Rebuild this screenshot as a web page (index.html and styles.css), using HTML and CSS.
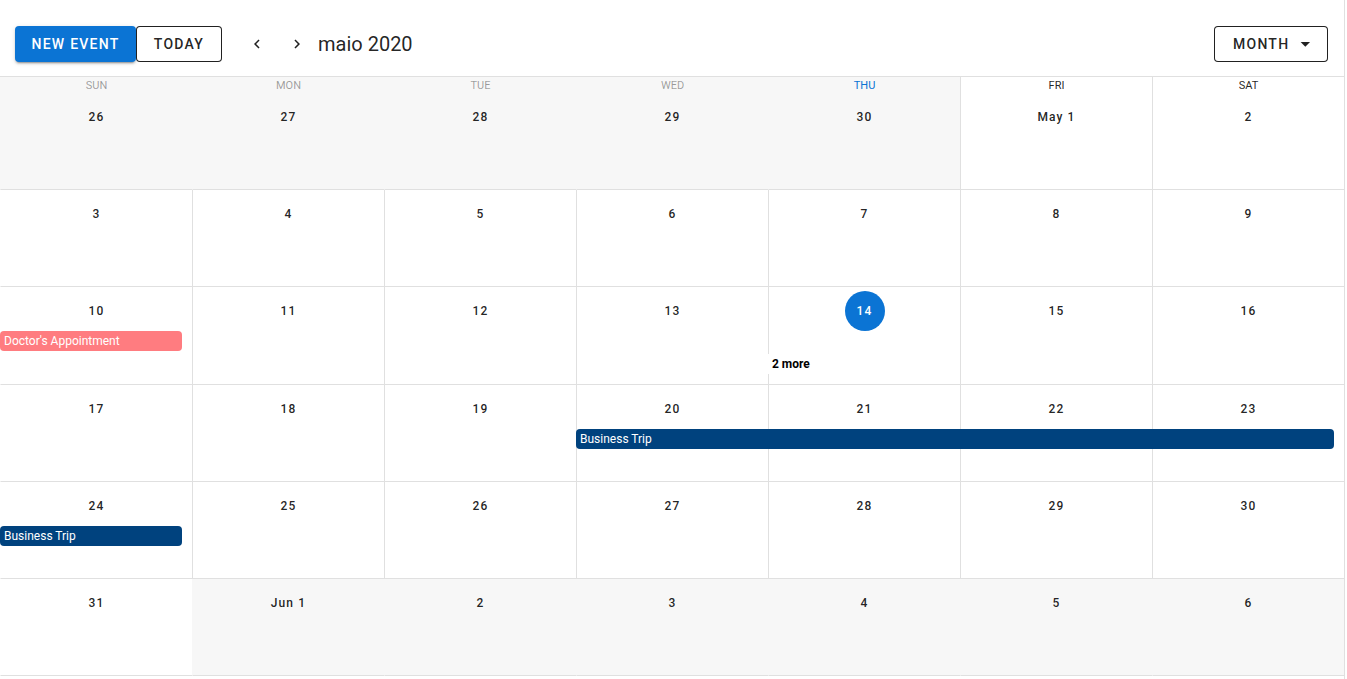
FILE: index.html
```html
<!DOCTYPE html>
<html lang="pt">
<head>
<meta charset="utf-8">
<title>Calendar</title>
<link rel="stylesheet" href="styles.css">
</head>
<body>
<div class="app">
  <header class="toolbar">
    <button class="btn btn-primary">New Event</button>
    <button class="btn btn-outlined btn-today">Today</button>
    <button class="icon-btn first" aria-label="prev">
      <svg viewBox="0 0 24 24" width="18" height="18"><path d="M15.41,16.58L10.83,12L15.41,7.41L14,6L8,12L14,18L15.41,16.58Z"/></svg>
    </button>
    <button class="icon-btn" aria-label="next">
      <svg viewBox="0 0 24 24" width="18" height="18"><path d="M8.59,16.58L13.17,12L8.59,7.41L10,6L16,12L10,18L8.59,16.58Z"/></svg>
    </button>
    <div class="title">maio 2020</div>
    <div class="spacer"></div>
    <button class="btn btn-outlined btn-menu">Month
      <svg class="caret" viewBox="0 0 24 24" width="24" height="24"><path d="M7,10L12,15L17,10H7Z"/></svg>
    </button>
  </header>

  <div class="calendar">
    <div class="head past outside">Sun</div>
    <div class="head past outside">Mon</div>
    <div class="head past outside">Tue</div>
    <div class="head past outside">Wed</div>
    <div class="head present outside">Thu</div>
    <div class="head">Fri</div>
    <div class="head">Sat</div>

    <div class="day outside"><div class="label">26</div></div>
    <div class="day outside"><div class="label">27</div></div>
    <div class="day outside"><div class="label">28</div></div>
    <div class="day outside"><div class="label">29</div></div>
    <div class="day outside"><div class="label">30</div></div>
    <div class="day"><div class="label">May 1</div></div>
    <div class="day"><div class="label">2</div></div>

    <div class="day"><div class="label">3</div></div>
    <div class="day"><div class="label">4</div></div>
    <div class="day"><div class="label">5</div></div>
    <div class="day"><div class="label">6</div></div>
    <div class="day"><div class="label">7</div></div>
    <div class="day"><div class="label">8</div></div>
    <div class="day"><div class="label">9</div></div>

    <div class="day"><div class="label">10</div><div class="event pink">Doctor's Appointment</div></div>
    <div class="day"><div class="label">11</div></div>
    <div class="day"><div class="label">12</div></div>
    <div class="day"><div class="label">13</div></div>
    <div class="day"><div class="label today">14</div><div class="more">2 more</div></div>
    <div class="day"><div class="label">15</div></div>
    <div class="day"><div class="label">16</div></div>

    <div class="day"><div class="label">17</div></div>
    <div class="day"><div class="label">18</div></div>
    <div class="day"><div class="label">19</div></div>
    <div class="day"><div class="label">20</div><div class="event navy span4">Business Trip</div></div>
    <div class="day"><div class="label">21</div></div>
    <div class="day"><div class="label">22</div></div>
    <div class="day"><div class="label">23</div></div>

    <div class="day"><div class="label">24</div><div class="event navy">Business Trip</div></div>
    <div class="day"><div class="label">25</div></div>
    <div class="day"><div class="label">26</div></div>
    <div class="day"><div class="label">27</div></div>
    <div class="day"><div class="label">28</div></div>
    <div class="day"><div class="label">29</div></div>
    <div class="day"><div class="label">30</div></div>

    <div class="day"><div class="label">31</div></div>
    <div class="day outside"><div class="label">Jun 1</div></div>
    <div class="day outside"><div class="label">2</div></div>
    <div class="day outside"><div class="label">3</div></div>
    <div class="day outside"><div class="label">4</div></div>
    <div class="day outside"><div class="label">5</div></div>
    <div class="day outside"><div class="label">6</div></div>
  </div>
</div>
</body>
</html>
```

FILE: styles.css
```css
* { box-sizing: border-box; }

html, body {
  margin: 0;
  padding: 0;
  background: #ffffff;
}

body {
  font-family: Roboto, "Liberation Sans", sans-serif;
  color: rgba(0, 0, 0, 0.87);
}

.app {
  width: 1345px;
  height: 679px;
  border-right: 1px solid #e0e0e0;
}

.toolbar {
  height: 76px;
  display: flex;
  align-items: center;
  padding: 26px 16px 14px 15px;
}

.btn {
  height: 36px;
  padding: 0 16px;
  border-radius: 4px;
  font-family: Roboto, "Liberation Sans", sans-serif;
  font-size: 14px;
  font-weight: 500;
  letter-spacing: 1.25px;
  text-transform: uppercase;
  display: inline-flex;
  align-items: center;
  cursor: pointer;
}

.btn-primary {
  background: #0b74d4;
  color: #ffffff;
  border: none;
  width: 121px;
  justify-content: center;
  box-shadow: 0 3px 1px -2px rgba(0,0,0,.2), 0 2px 2px 0 rgba(0,0,0,.14), 0 1px 5px 0 rgba(0,0,0,.12);
}

.btn-outlined {
  background: #ffffff;
  color: rgba(0, 0, 0, 0.87);
  border: 1px solid rgba(0, 0, 0, 0.87);
}

.btn-today {
  width: 86px;
  justify-content: center;
  padding: 0;
}

.btn-menu {
  width: 114px;
  padding-left: 18px;
}

.caret {
  fill: rgba(0, 0, 0, 0.87);
  margin-left: 5px;
  margin-right: -6px;
}

.icon-btn {
  width: 40px;
  height: 40px;
  border: none;
  background: transparent;
  border-radius: 50%;
  display: inline-flex;
  align-items: center;
  justify-content: center;
  padding: 0;
  cursor: pointer;
}

.icon-btn svg {
  fill: rgba(0, 0, 0, 0.87);
}

.icon-btn.first {
  margin-left: 15px;
}

.title {
  font-size: 20px;
  line-height: 1.2;
  margin-left: 1px;
  color: rgba(0, 0, 0, 0.87);
}

.spacer {
  flex: 1;
}

.calendar {
  height: 600px;
  border-top: 1px solid #e0e0e0;
  display: grid;
  grid-template-columns: repeat(7, 192px);
  grid-template-rows: 16px 97px 97px 98px 97px 97px 97px;
}

.head {
  font-size: 11px;
  line-height: 15px;
  padding-top: 1px;
  text-align: center;
  text-transform: uppercase;
  border-left: 1px solid #e0e0e0;
  color: rgba(0, 0, 0, 0.87);
  background: #ffffff;
}

.head.past {
  color: rgba(0, 0, 0, 0.38);
}

.head.present {
  color: #0b74d4;
}

.head.outside {
  background: #f7f7f7;
  border-left-color: transparent;
}

.day {
  min-width: 0;
  border-left: 1px solid #e0e0e0;
  border-bottom: 1px solid #e0e0e0;
  background: #ffffff;
}

.day.outside {
  background: #f7f7f7;
  border-left-color: transparent;
}

.calendar > :nth-child(7n+1) {
  border-left-color: transparent;
}

.label {
  width: 40px;
  height: 40px;
  margin: 4px auto 0;
  border-radius: 50%;
  text-align: center;
  line-height: 40px;
  font-size: 12px;
  font-weight: 500;
  letter-spacing: 1.1px;
  white-space: nowrap;
  display: flex;
  justify-content: center;
}

.label.today {
  background: #0b74d4;
  color: #ffffff;
}

.event {
  position: relative;
  z-index: 1;
  width: 182px;
  height: 20px;
  line-height: 20px;
  margin-left: -1px;
  margin-bottom: 1px;
  padding: 0 4px;
  border-radius: 4px;
  font-size: 12px;
  color: #ffffff;
  white-space: nowrap;
  overflow: hidden;
}

.event.span4 {
  width: 758px;
}

.pink {
  background: #ff7c80;
}

.navy {
  background: #00427e;
}

.more {
  margin-top: 23px;
  margin-left: -1px;
  height: 20px;
  line-height: 20px;
  padding-left: 4px;
  background: #ffffff;
  font-size: 12px;
  font-weight: 700;
  color: #000000;
  position: relative;
}
```
